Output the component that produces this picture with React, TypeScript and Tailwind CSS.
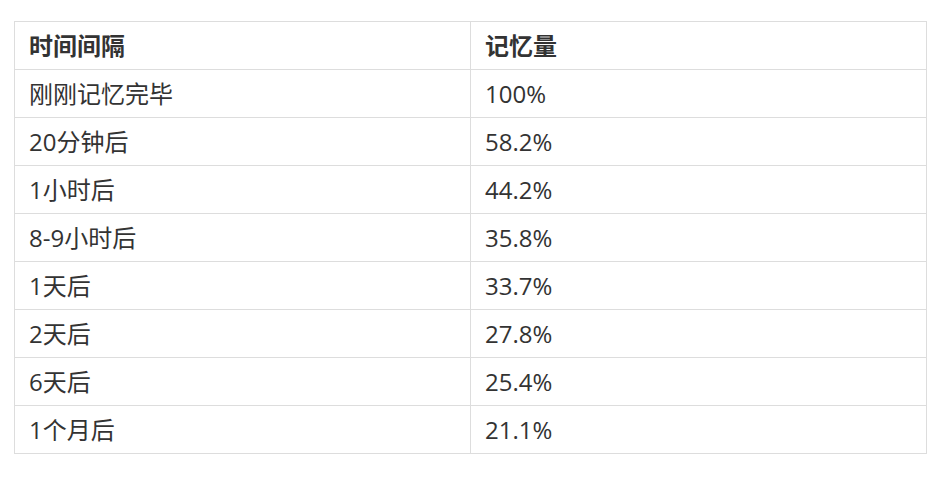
const rows: [string, string][] = [
  ['刚刚记忆完毕', '100%'],
  ['20分钟后', '58.2%'],
  ['1小时后', '44.2%'],
  ['8-9小时后', '35.8%'],
  ['1天后', '33.7%'],
  ['2天后', '27.8%'],
  ['6天后', '25.4%'],
  ['1个月后', '21.1%'],
]

export default function App() {
  return (
    <div
      className="w-[952px] h-[480px] bg-white pt-[21px] pl-[14px] text-[#333333]"
      style={{ fontFamily: '"Open Sans", "Noto Sans CJK SC", sans-serif' }}
    >
      <table className="w-[913px] border-collapse table-fixed text-[24px]">
        <thead>
          <tr className="h-[48px]">
            <th className="border border-[#dddddd] text-left font-bold pl-[14px]">时间间隔</th>
            <th className="border border-[#dddddd] text-left font-bold pl-[14px]">记忆量</th>
          </tr>
        </thead>
        <tbody>
          {rows.map(([t, v]) => (
            <tr key={t} className="h-[48px]">
              <td className="border border-[#dddddd] pl-[14px]">{t}</td>
              <td className="border border-[#dddddd] pl-[14px]">{v}</td>
            </tr>
          ))}
        </tbody>
      </table>
    </div>
  )
}
